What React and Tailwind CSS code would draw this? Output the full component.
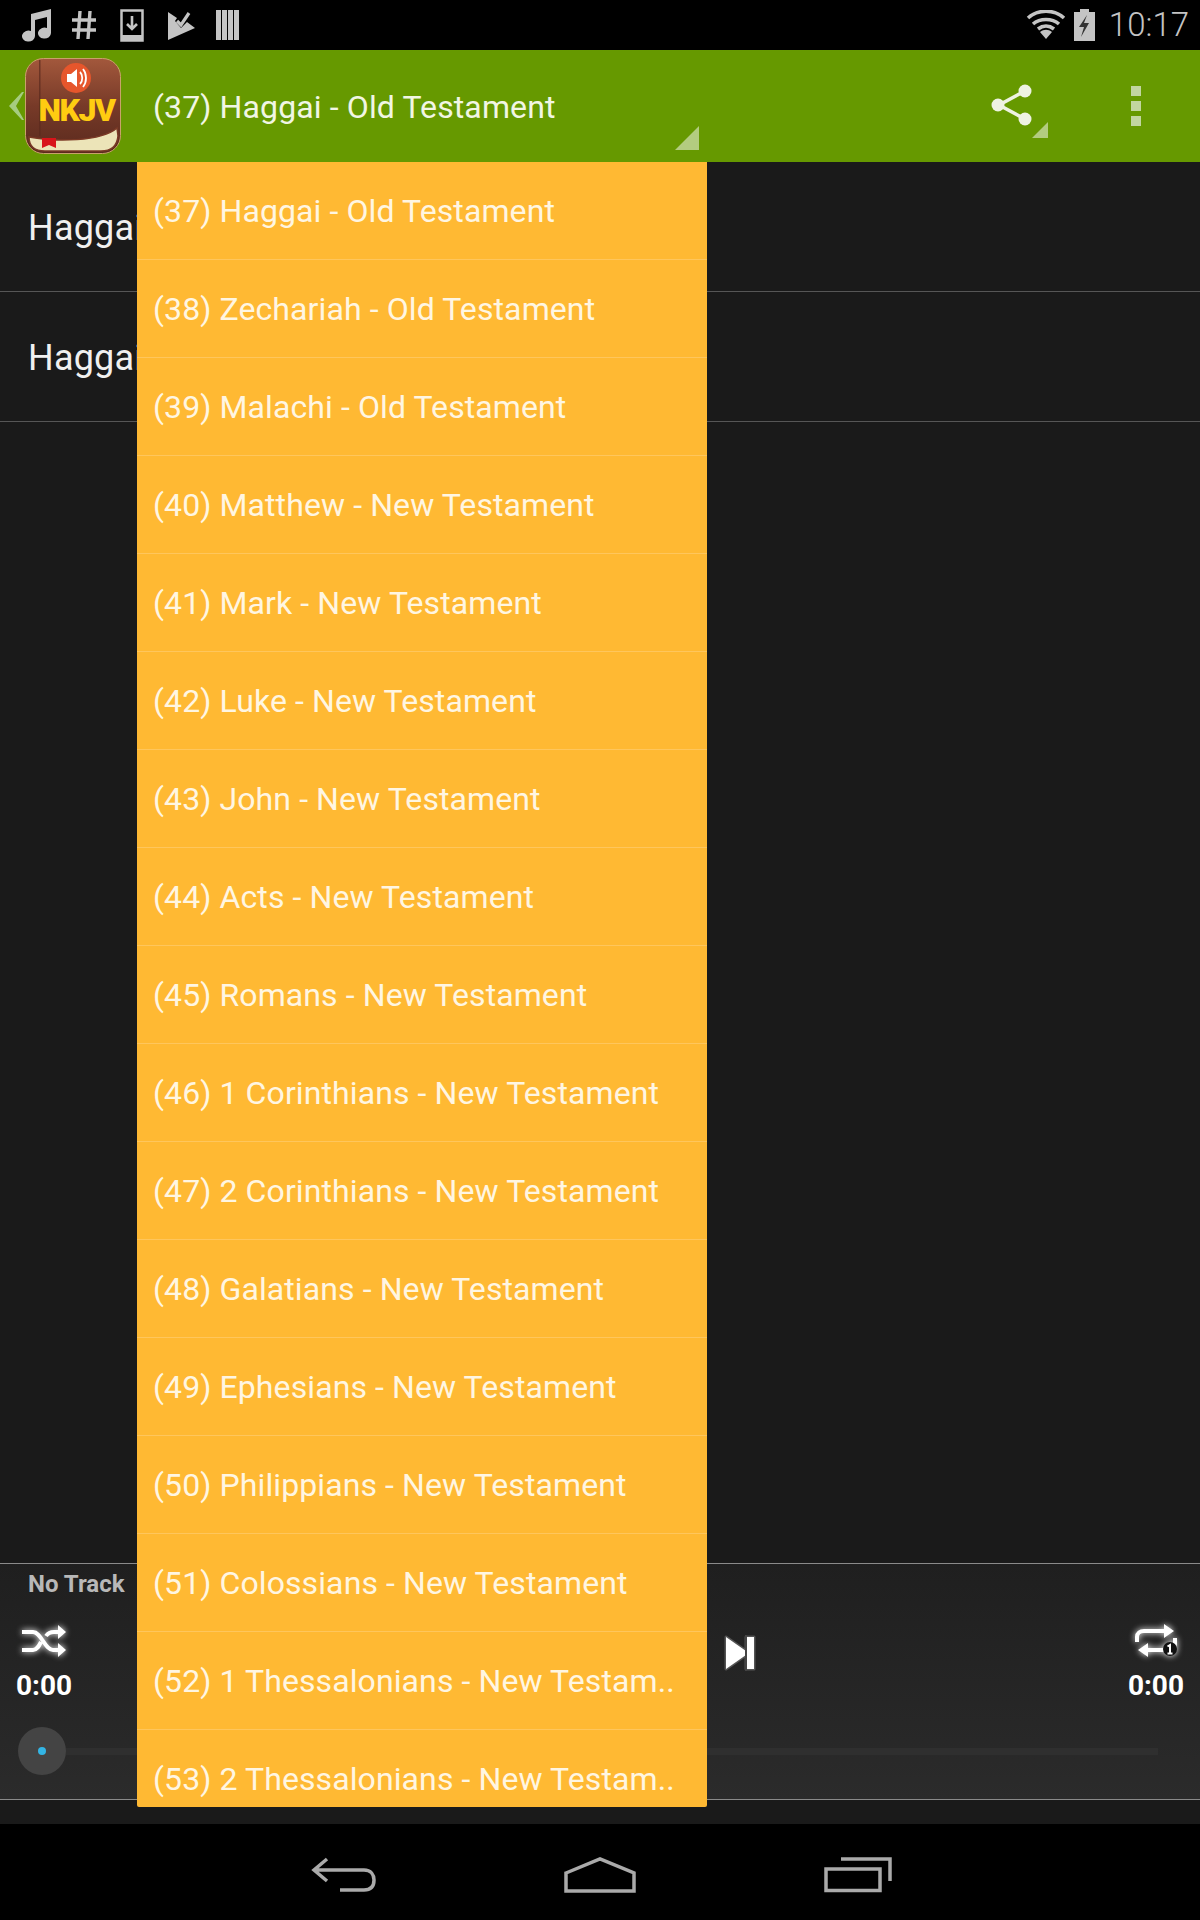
const books = [
  "(37) Haggai - Old Testament",
  "(38) Zechariah - Old Testament",
  "(39) Malachi - Old Testament",
  "(40) Matthew - New Testament",
  "(41) Mark - New Testament",
  "(42) Luke - New Testament",
  "(43) John - New Testament",
  "(44) Acts - New Testament",
  "(45) Romans - New Testament",
  "(46) 1 Corinthians - New Testament",
  "(47) 2 Corinthians - New Testament",
  "(48) Galatians - New Testament",
  "(49) Ephesians - New Testament",
  "(50) Philippians - New Testament",
  "(51) Colossians - New Testament",
  "(52) 1 Thessalonians - New Testam..",
  "(53) 2 Thessalonians - New Testam..",
];

function StatusLeft() {
  return (
    <div className="flex items-center h-full">
      <svg width="34" height="34" viewBox="0 0 34 34" className="ml-[20px]" fill="#c4c4c4">
        <path d="M11 6 L31 1 V25 A6.5 5.5 0 1 1 27 20 V9 L15 12 V28 A6.5 5.5 0 1 1 11 23 Z" />
      </svg>
      <svg width="26" height="32" viewBox="0 0 26 32" className="ml-[17px]" fill="none" stroke="#c4c4c4" strokeWidth="3.4">
        <path d="M9 2 L7 30 M19 2 L17 30 M1 11 H25 M1 21 H25" />
      </svg>
      <svg width="24" height="33" viewBox="0 0 24 33" className="ml-[23px]" fill="none">
        <path d="M1.5 1.5 H22.5 V31.5 H1.5 Z" stroke="#c4c4c4" strokeWidth="2.5" />
        <rect x="1" y="26" width="22" height="6" fill="#c4c4c4" />
        <path d="M12 7 V19 M7 15 L12 20 L17 15" stroke="#c4c4c4" strokeWidth="2.6" />
      </svg>
      <svg width="27" height="31" viewBox="0 0 27 31" className="ml-[24px]" fill="#c4c4c4">
        <path d="M0 2 L9 8 L7 11 L13 18 L19 12 L27 18 L0 30 Z" />
        <path d="M9 11 L13 15 L21 3" stroke="#c4c4c4" strokeWidth="3.2" fill="none" />
      </svg>
      <div className="ml-[21px] flex gap-[1px]">
        <div className="w-[5px] h-[30px] bg-[#c4c4c4]" />
        <div className="w-[5px] h-[30px] bg-[#c4c4c4]" />
        <div className="w-[5px] h-[30px] bg-[#c4c4c4]" />
        <div className="w-[5px] h-[30px] bg-[#c4c4c4]" />
      </div>
    </div>
  );
}

function AppLogo() {
  return (
    <div className="relative w-[96px] h-[96px] shrink-0">
      <svg width="96" height="96" viewBox="0 0 96 96">
        <defs>
          <linearGradient id="cover" x1="0" y1="0" x2="0" y2="1">
            <stop offset="0" stopColor="#a3583c" />
            <stop offset="0.5" stopColor="#773a28" />
            <stop offset="1" stopColor="#5a2a1e" />
          </linearGradient>
        </defs>
        <rect x="0.5" y="0.5" width="95" height="95" rx="18" fill="url(#cover)" stroke="#c9a26a" strokeWidth="1" />
        <rect x="14" y="2" width="1.5" height="76" fill="#5a2a1e" opacity="0.7" />
        <path d="M4 79 C30 84 76 84 92 70 L93 78 C92 88 86 93 76 93 H20 C10 93 4 88 4 79 Z" fill="#ece4b8" stroke="#7b3a26" strokeWidth="1.5" />
        <path d="M17 80 H31 V90 L24 87 L17 90 Z" fill="#d8141a" />
        <circle cx="51" cy="20" r="15" fill="#e6562c" />
        <path d="M42 16 H46 L52 11 V29 L46 24 H42 Z" fill="#fff" />
        <path d="M55 14 C58 17 58 23 55 26 M58 11 C62 16 62 24 58 29" stroke="#fff" strokeWidth="1.8" fill="none" />
      </svg>
      <span className="absolute left-[7px] right-0 top-[32px] text-center text-[#ffcc11] font-black text-[32px] leading-[40px] tracking-[-1.5px] font-['Roboto',sans-serif]">NKJV</span>
    </div>
  );
}

function Corner({ className }) {
  return (
    <svg viewBox="0 0 24 24" className={className}>
      <path d="M24 0 V24 H0 Z" fill="#ffffff" fillOpacity="0.5" />
    </svg>
  );
}

function Header() {
  return (
    <header className="h-[112px] bg-[#669900] flex items-center shrink-0 relative">
      <svg width="16" height="30" viewBox="0 0 16 30" className="ml-[8px] mr-[1px] shrink-0" fill="#a6cc80">
        <path d="M14 1 L1 15 L14 29 H16 L8 15 L16 1 Z" />
      </svg>
      <AppLogo />
      <div className="ml-[32px] w-[546px] h-full relative flex items-center">
        <span className="text-[32px] tracking-[0.12px] text-[#f1f6e4] font-['Roboto',sans-serif] mt-[1px]">(37) Haggai - Old Testament</span>
        <Corner className="absolute w-[24px] h-[24px] right-0 bottom-[12px]" />
      </div>
      <div className="ml-[285px] relative w-[56px] h-full flex items-center justify-center">
        <svg width="42" height="42" viewBox="0 0 42 42" fill="#eef2e2" className="mb-[2px]">
          <path d="M34 7 L8 21 L34 35" stroke="#eef2e2" strokeWidth="3.5" fill="none" />
          <circle cx="34" cy="7" r="6.5" />
          <circle cx="7" cy="21" r="6.5" />
          <circle cx="34" cy="35" r="6.5" />
        </svg>
        <Corner className="absolute w-[16px] h-[16px] right-[-8px] bottom-[24px]" />
      </div>
      <div className="ml-[91px] flex flex-col gap-[5px]">
        <div className="w-[10px] h-[10px] bg-[#c2d6a0]" />
        <div className="w-[10px] h-[10px] bg-[#c2d6a0]" />
        <div className="w-[10px] h-[10px] bg-[#c2d6a0]" />
      </div>
    </header>
  );
}

function Player() {
  return (
    <div className="h-[237px] shrink-0 border-y border-[#8a8a8a] bg-gradient-to-b from-[#1f1f1f] to-[#2b2b2b] flex flex-col">
      <div className="h-[38px] pl-[28px] pt-[2px] text-[24px] leading-[36px] font-bold text-[#b8b8b8] font-['Roboto',sans-serif]">No Track</div>
      <div className="h-[114px] flex items-start pl-[16px] pr-[16px] pt-[22px]">
        <div className="flex flex-col items-center">
          <svg width="46" height="34" viewBox="0 0 46 34" fill="none" stroke="#ffffff" strokeWidth="4" className="drop-shadow-[0_0_3px_#ffffff]">
            <path d="M1 8 H12 C20 8 24 26 32 26 H40 M1 26 H12 C16 26 18 22 20 18 M25 12 C27 9 29 8 33 8 H40" />
            <path d="M37 1 L45 8 L37 15 Z M37 19 L45 26 L37 33 Z" fill="#ffffff" stroke="none" />
          </svg>
          <span className="text-[28px] leading-[34px] mt-[11px] font-bold text-white font-['Roboto',sans-serif]">0:00</span>
        </div>
        <svg width="32" height="38" viewBox="0 0 32 38" className="ml-[652px] mt-[10px]">
          <path d="M2 3 L22 17 V3 H30 V35 H22 V21 L2 35 Z" fill="#ffffff" stroke="#555555" strokeWidth="3" strokeLinejoin="round" paintOrder="stroke" />
          <path d="M22 1 V37" stroke="#444444" strokeWidth="2" />
        </svg>
        <div className="ml-auto flex flex-col items-center">
          <svg width="44" height="34" viewBox="0 0 44 34" fill="none" stroke="#ffffff" strokeWidth="4" className="drop-shadow-[0_0_3px_#ffffff]">
            <path d="M3 18 V13 C3 9 6 7 10 7 H33 M41 14 V20 C41 24 38 26 34 26 H11" />
            <path d="M30 0 L40 7 L30 14 Z M14 19 L4 26 L14 33 Z" fill="#ffffff" stroke="none" />
            <circle cx="36" cy="25" r="7" fill="#111111" stroke="none" />
            <path d="M33.5 22.5 L36 21 V29.5 M33.5 29.5 H38.5" stroke="#ffffff" strokeWidth="2" />
          </svg>
          <span className="text-[28px] leading-[34px] mt-[11px] font-bold text-white font-['Roboto',sans-serif]">0:00</span>
        </div>
      </div>
      <div className="flex-1 flex items-center pl-[18px] pr-[42px] pb-[13px]">
        <div className="w-[48px] h-[48px] rounded-full bg-[#444444] flex items-center justify-center shrink-0">
          <div className="w-[8px] h-[8px] rounded-full bg-[#33b5e5]" />
        </div>
        <div className="flex-1 h-[7px] bg-[#2f2f2f]" />
      </div>
    </div>
  );
}

function NavBar() {
  return (
    <nav className="h-[96px] bg-black shrink-0 flex items-start pt-[33px]">
      <svg width="66" height="36" viewBox="0 0 66 36" className="ml-[311px]" fill="none" stroke="#aaaaaa" strokeWidth="3.5">
        <path d="M16 2 L3 13 L16 24 M3 13 H53 C60 13 63 18 63 23 C63 29 60 33 53 33 H29" />
      </svg>
      <svg width="72" height="36" viewBox="0 0 72 36" className="ml-[187px]" fill="none" stroke="#aaaaaa" strokeWidth="3.5">
        <path d="M2 16 L36 2 L70 16 V34 H2 Z" />
      </svg>
      <svg width="68" height="36" viewBox="0 0 68 36" className="ml-[188px]" fill="none" stroke="#aaaaaa" strokeWidth="3.5">
        <path d="M2 12 H56 V33.5 H2 Z M17 2 H66 V24" />
      </svg>
    </nav>
  );
}

export default function App() {
  return (
    <div className="relative w-[1200px] h-[1920px] bg-[#1a1a1a] flex flex-col overflow-hidden font-['Roboto',sans-serif]">
      <div className="h-[50px] bg-black shrink-0 flex items-center justify-between">
        <StatusLeft />
        <div className="flex items-center pr-[11px]">
          <svg width="40" height="30" viewBox="0 0 40 30" fill="none" stroke="#c4c4c4" strokeWidth="3.6">
            <path d="M2 8 C12 -1 28 -1 38 8 M7 14 C14 8 26 8 33 14 M12 19 C17 15 23 15 28 19" />
            <path d="M14 22 C18 19 22 19 26 22 L20 29 Z" fill="#c4c4c4" stroke="none" />
          </svg>
          <svg width="21" height="32" viewBox="0 0 21 32" className="ml-[8px]">
            <path d="M6 0 H15 V3 H21 V32 H0 V3 H6 Z" fill="#c4c4c4" />
            <path d="M13 6 L5 18 H10 L7 28 L15 14 H10 Z" fill="#333333" />
          </svg>
          <span className="ml-[14px] text-[33px] leading-[50px] text-[#c4c4c4] font-light font-['Roboto',sans-serif]">10:17</span>
        </div>
      </div>
      <Header />
      <main className="flex-1 flex flex-col min-h-0">
        <div className="h-[130px] border-b border-[#565656] flex items-center pl-[28px] pt-[2px] text-[36px] tracking-[0.2px] text-[#f0f0f0] shrink-0">Haggai</div>
        <div className="h-[130px] border-b border-[#565656] flex items-center pl-[28px] pt-[2px] text-[36px] tracking-[0.2px] text-[#f0f0f0] shrink-0">Haggai</div>
        <div className="flex-1" />
        <Player />
        <div className="h-[24px] shrink-0" />
      </main>
      <NavBar />
      <div className="absolute left-[137px] top-[162px] w-[570px] h-[1645px] bg-[#ffb933] overflow-hidden rounded-b-[2px]">
        {books.map((b) => (
          <div key={b} className="h-[98px] border-b border-[#ffc65c] flex items-center pl-[16px]">
            <span className="block whitespace-nowrap text-[32px] tracking-[0.1px] text-[#fff6e2]">{b}</span>
          </div>
        ))}
      </div>
    </div>
  );
}
